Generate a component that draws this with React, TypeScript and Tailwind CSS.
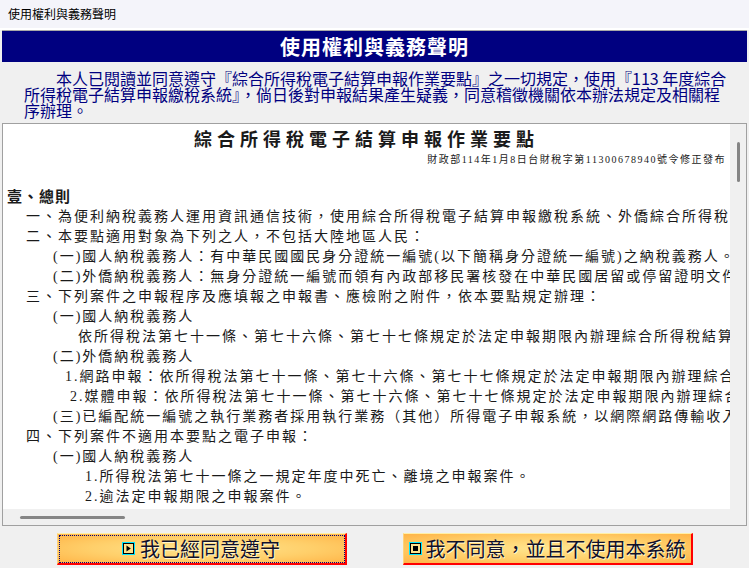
import React from "react";

interface DocLine {
  indent: string;
  text: string;
}

// 要點內文（畫面只看得到左半部，右側被 iframe 裁掉）
const docLines: DocLine[] = [
  { indent: "pl-[23px]", text: "一、為便利納稅義務人運用資訊通信技術，使用綜合所得稅電子結算申報繳稅系統、外僑綜合所得稅電子結算申報繳稅系統辦理結算申報及繳納稅款，特訂定本要點。" },
  { indent: "pl-[23px]", text: "二、本要點適用對象為下列之人，不包括大陸地區人民：" },
  { indent: "pl-[50px]", text: "(一)國人納稅義務人：有中華民國國民身分證統一編號(以下簡稱身分證統一編號)之納稅義務人。" },
  { indent: "pl-[50px]", text: "(二)外僑納稅義務人：無身分證統一編號而領有內政部移民署核發在中華民國居留或停留證明文件之納稅義務人。" },
  { indent: "pl-[23px]", text: "三、下列案件之申報程序及應填報之申報書、應檢附之附件，依本要點規定辦理：" },
  { indent: "pl-[50px]", text: "(一)國人納稅義務人" },
  { indent: "pl-[75px]", text: "依所得稅法第七十一條、第七十六條、第七十七條規定於法定申報期限內辦理綜合所得稅結算申報之案件。" },
  { indent: "pl-[50px]", text: "(二)外僑納稅義務人" },
  { indent: "pl-[62px]", text: "1.網路申報：依所得稅法第七十一條、第七十六條、第七十七條規定於法定申報期限內辦理綜合所得稅結算申報之案件。" },
  { indent: "pl-[67px]", text: "2.媒體申報：依所得稅法第七十一條、第七十六條、第七十七條規定於法定申報期限內辦理綜合所得稅結算申報之案件。" },
  { indent: "pl-[50px]", text: "(三)已編配統一編號之執行業務者採用執行業務（其他）所得電子申報系統，以網際網路傳輸收入及費用資料之案件。" },
  { indent: "pl-[23px]", text: "四、下列案件不適用本要點之電子申報：" },
  { indent: "pl-[50px]", text: "(一)國人納稅義務人" },
  { indent: "pl-[82px]", text: "1.所得稅法第七十一條之一規定年度中死亡、離境之申報案件。" },
  { indent: "pl-[82px]", text: "2.逾法定申報期限之申報案件。" },
];

function PlayIcon() {
  return (
    <svg width="13" height="13" viewBox="0 0 13 13">
      <rect x="0.5" y="0.5" width="12" height="12" fill="#ffe9a0" stroke="#00e5ff" />
      <rect x="1.5" y="1.5" width="10" height="10" fill="#ffe08a" stroke="#000" />
      <path d="M4.5 3.5 L8.8 6.5 L4.5 9.5 Z" fill="#000" />
    </svg>
  );
}

function StopIcon() {
  return (
    <svg width="13" height="13" viewBox="0 0 13 13">
      <rect x="0.5" y="0.5" width="12" height="12" fill="#ffe9a0" stroke="#00e5ff" />
      <rect x="1.5" y="1.5" width="10" height="10" fill="#ffe08a" stroke="#000" />
      <rect x="4" y="4" width="5" height="5" fill="#000" />
    </svg>
  );
}

export default function App() {
  return (
    <div className="w-[749px] h-[568px] overflow-hidden bg-[#f0f0f0] font-['Noto_Sans_CJK_TC',sans-serif]">
      {/* Window title */}
      <div className="h-[30px] bg-[#f4f4fa] px-[8px] flex items-center text-[12px] text-black border-b-2 border-white">
        使用權利與義務聲明
      </div>

      {/* Header bar */}
      <div className="h-[32px] mx-[2px] border-t border-[#a8a8a8] bg-[#000080] flex items-center justify-center">
        <span className="text-white text-[20px] font-bold tracking-[1px] leading-none">使用權利與義務聲明</span>
      </div>

      {/* Consent paragraph */}
      <div className="pt-[8px] pb-[5px] pl-[24px]">
        <p className="w-[706px] text-[16px] leading-[16px] text-[#000080] indent-[32px]">
          本人已閱讀並同意遵守『綜合所得稅電子結算申報作業要點』之一切規定，使用『113 年度綜合所得稅電子結算申報繳稅系統』，倘日後對申報結果產生疑義，同意稽徵機關依本辦法規定及相關程序辦理。
        </p>
      </div>

      {/* Embedded document */}
      <div className="mx-[2px] h-[403px] border border-[#a0a0a0] bg-[#f0f0f0] flex flex-col">
        <div className="flex flex-1 min-h-0">
          <div className="flex-1 min-w-0 overflow-hidden bg-white text-[#1a1a1a] font-['Liberation_Serif','Noto_Sans_CJK_TC',serif]">
            <div className="pt-[4px] text-center text-[18px] leading-[24px] font-bold tracking-[5px] whitespace-nowrap">
              綜合所得稅電子結算申報作業要點
            </div>
            <div className="pr-[4px] text-right text-[10px] leading-[16px] tracking-[1.5px] whitespace-nowrap">
              財政部114年1月8日台財稅字第11300678940號令修正發布
            </div>
            <div className="mt-[19px] pl-[4px] text-[15px] leading-[20px] font-bold tracking-[1px] whitespace-nowrap">
              壹、總則
            </div>
            {docLines.map((line, i) => (
              <div key={i} className={`${line.indent} text-[14px] leading-[20px] tracking-[2px] whitespace-nowrap`}>
                {line.text}
              </div>
            ))}
          </div>
          {/* vertical scrollbar */}
          <div className="w-[16px] bg-[#f0f0f0] pt-[18px]">
            <div className="ml-[7px] w-[3px] h-[40px] rounded-full bg-[#858585]" />
          </div>
        </div>
        {/* horizontal scrollbar */}
        <div className="h-[16px] bg-[#f0f0f0] pt-[7px] pl-[17px]">
          <div className="w-[105px] h-[3px] rounded-full bg-[#858585]" />
        </div>
      </div>

      {/* Buttons */}
      <div className="pt-[7px] flex justify-center gap-[56px]">
        <button className="w-[290px] h-[32px] flex items-center justify-center gap-[5px] border-t border-l border-t-[#fff0a8] border-l-[#ffd27a] border-r-2 border-b-2 border-r-[#ff0000] border-b-[#ff0000] bg-[radial-gradient(ellipse_at_center,#ffe690_0%,#ffcf6a_55%,#ffb447_100%)] outline outline-1 outline-dotted outline-[#000080] outline-offset-[-3px]">
          <PlayIcon />
          <span className="text-[20px] leading-none text-[#10102a] [text-shadow:1px_1px_0_#fff6d0]">我已經同意遵守</span>
        </button>
        <button className="w-[290px] h-[32px] flex items-center justify-center gap-[4px] border-t border-l border-t-[#fff0a8] border-l-[#ffd27a] border-r-2 border-b-2 border-r-[#ff0000] border-b-[#ff0000] bg-[radial-gradient(ellipse_at_center,#ffe690_0%,#ffcf6a_55%,#ffb447_100%)]">
          <StopIcon />
          <span className="text-[20px] leading-none text-[#10102a] [text-shadow:1px_1px_0_#fff6d0]">我不同意，並且不使用本系統</span>
        </button>
      </div>
    </div>
  );
}
